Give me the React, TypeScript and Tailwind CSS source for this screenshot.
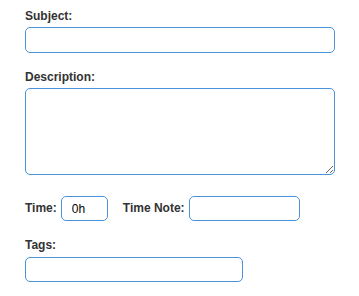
import React from "react";

const inputCls =
  "box-border border border-[#4b92d8] rounded-[5px] bg-white outline-none text-[12px] text-black px-[9px] font-['Liberation_Sans',Arial,sans-serif]";

export default function App() {
  return (
    <div className="w-[359px] h-[296px] bg-white font-['Liberation_Sans',Arial,sans-serif] text-[#333] pl-[25px] pt-[9px]">
      <div className="flex flex-col">
        <label className="text-[12px] leading-[15px] font-bold">Subject:</label>
        <input className={`${inputCls} mt-[3px] w-[310px] h-[26px]`} />
        <label className="text-[12px] leading-[15px] font-bold mt-[17px]">Description:</label>
        <textarea className={`${inputCls} mt-[3px] w-[310px] h-[87px] block`} />
        <div className="flex items-center mt-[21px] h-[25px]">
          <label className="text-[12px] leading-[15px] font-bold">Time:</label>
          <input className={`${inputCls} ml-[4px] w-[47px] h-[25px] pl-[10px]`} defaultValue="0h" />
          <label className="text-[12px] leading-[15px] font-bold ml-[15px]">Time Note:</label>
          <input className={`${inputCls} ml-[4px] w-[111px] h-[25px]`} />
        </div>
        <label className="text-[12px] leading-[15px] font-bold mt-[17px]">Tags:</label>
        <input className={`${inputCls} mt-[4px] w-[218px] h-[25px]`} />
      </div>
    </div>
  );
}
